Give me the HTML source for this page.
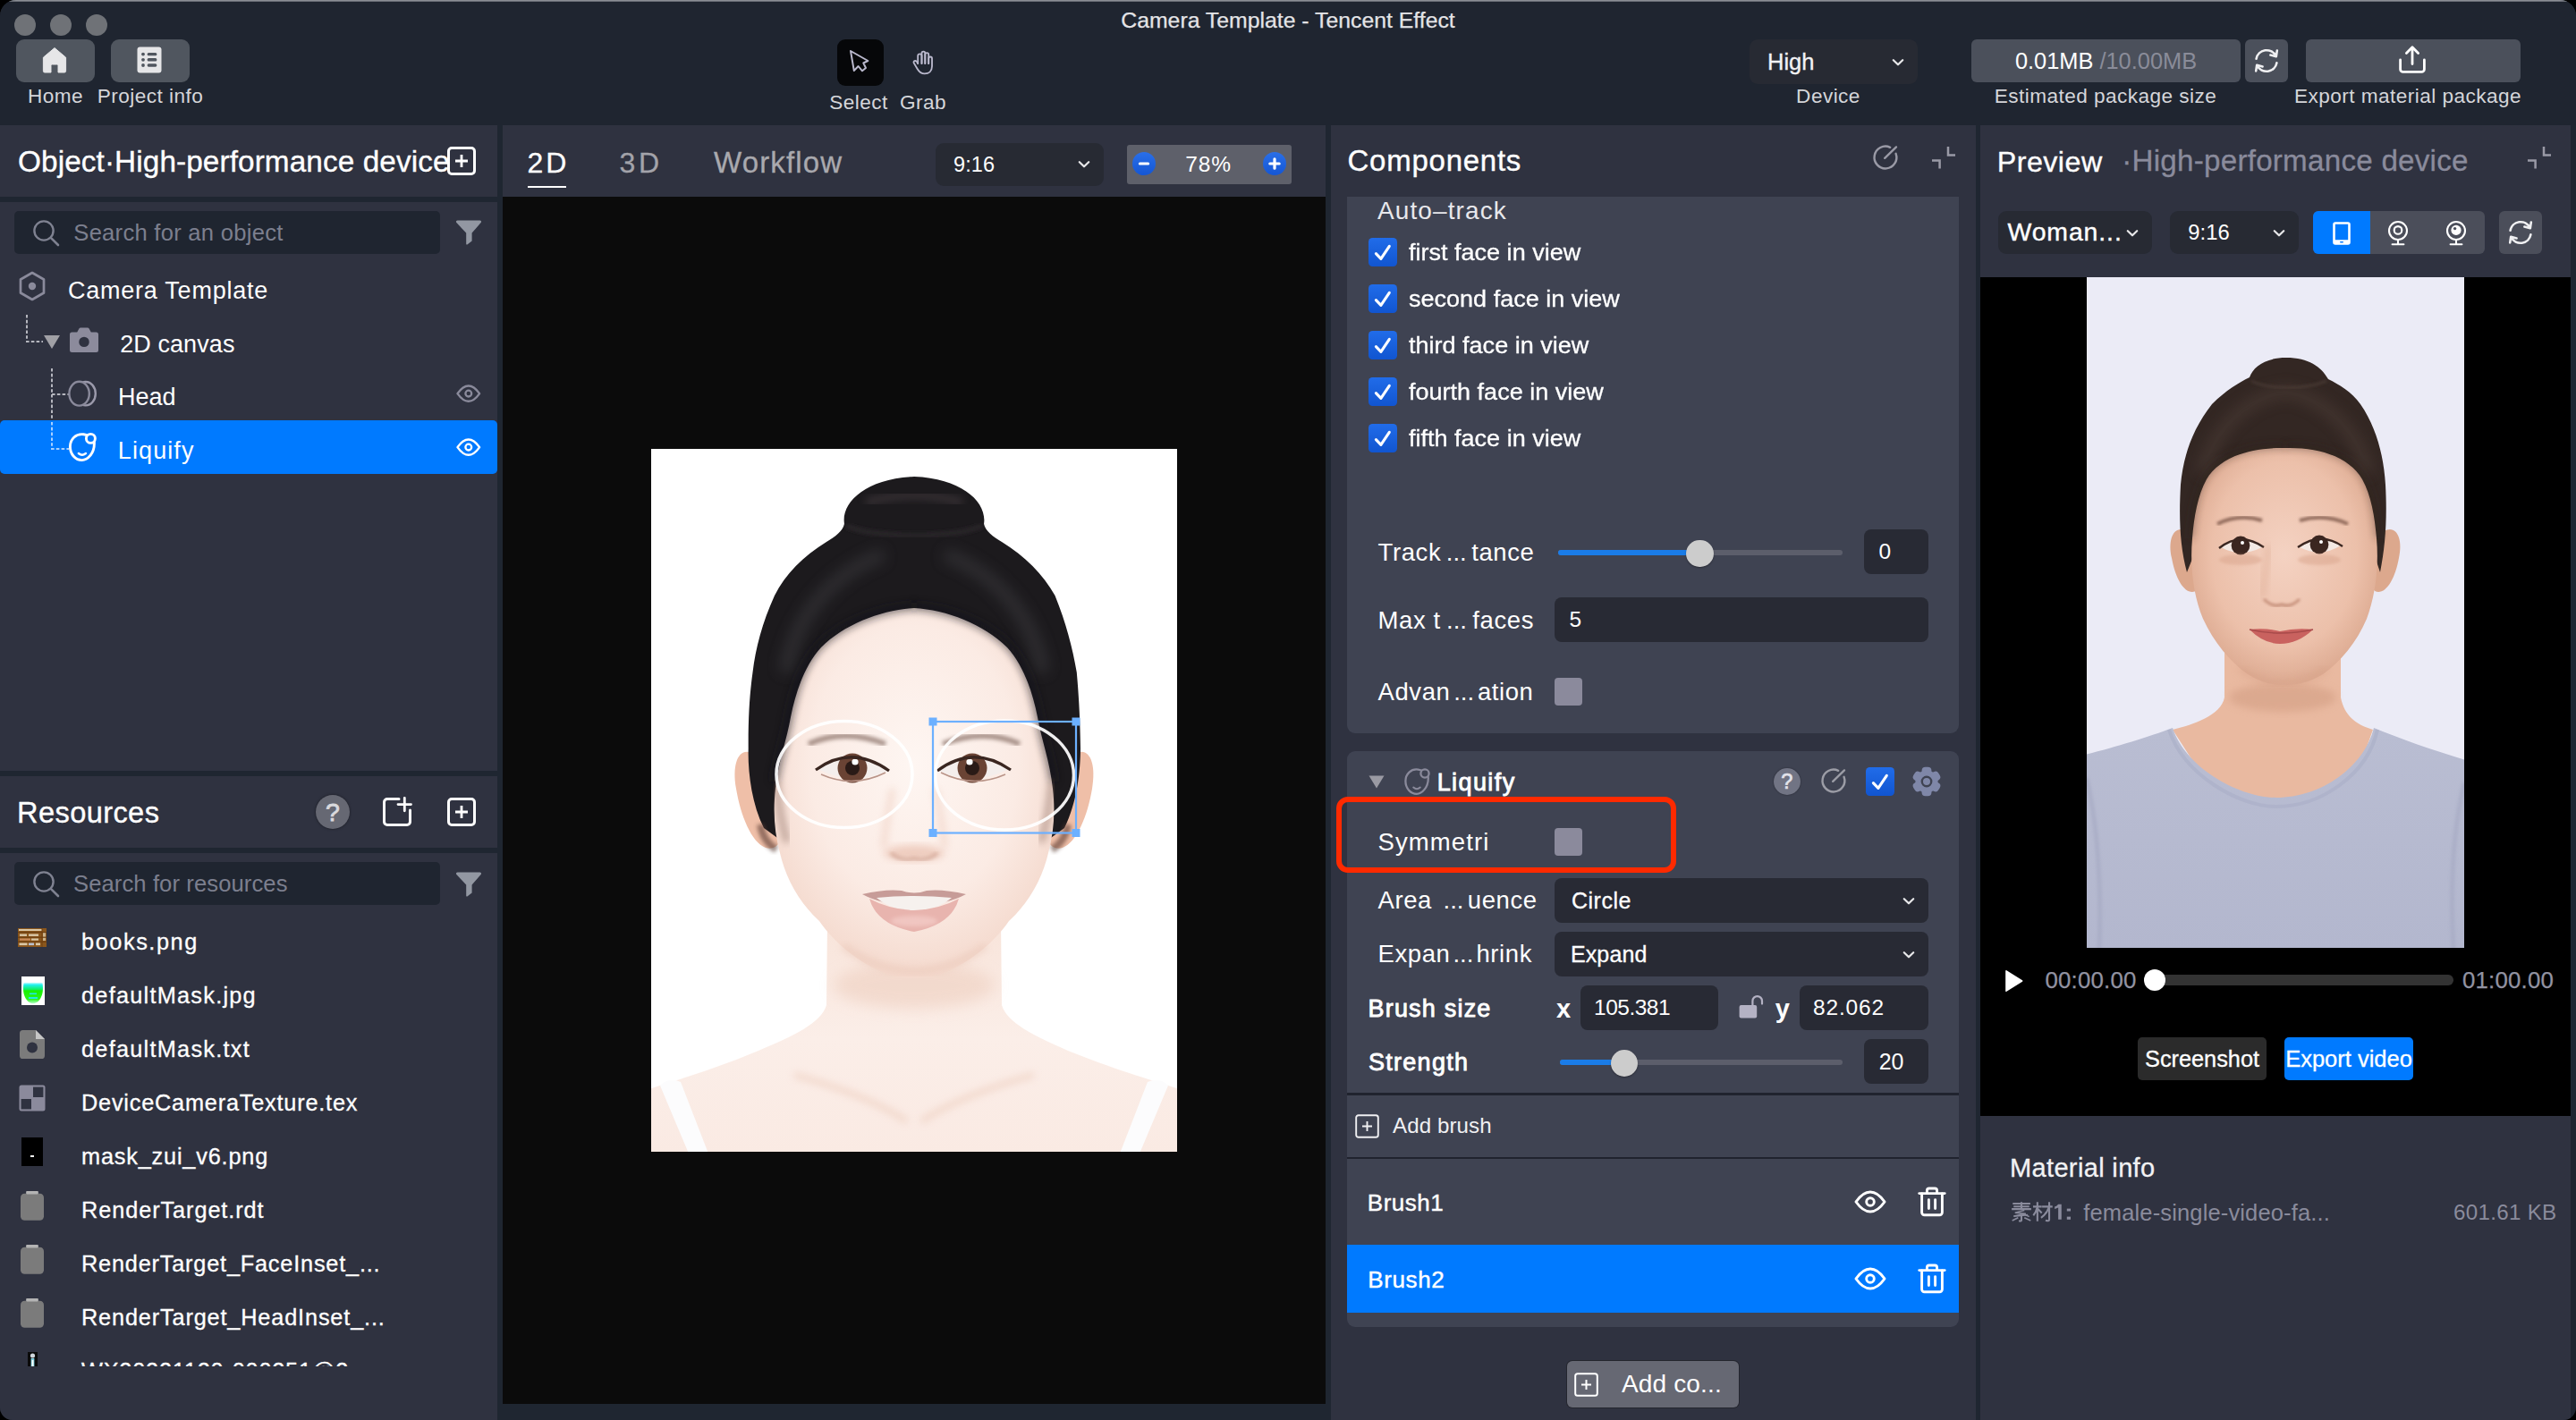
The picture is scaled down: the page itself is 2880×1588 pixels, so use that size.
<!DOCTYPE html>
<html>
<head>
<meta charset="utf-8">
<title>Camera Template - Tencent Effect</title>
<style>
*{box-sizing:border-box;margin:0;padding:0}
html,body{width:2880px;height:1588px;overflow:hidden;background:#000}
body{font-family:"Liberation Sans",sans-serif;color:#fff;position:relative}
.abs,#win div,#win span,#win svg{position:absolute}
#win{position:absolute;left:0;top:0;width:2880px;height:1588px;background:#1f2631;border-radius:18px 18px 14px 14px;overflow:hidden}
.t{white-space:nowrap;line-height:40px;height:40px}
.c{text-align:center}
.r{text-align:right}
.panel{background:#2f3240}
.card{background:#3f4352;border-radius:9px}
.inp{background:#282a34;border-radius:8px}
.lbl{font-size:22.6px;color:#d5d6da;letter-spacing:.45px}
.row{font-size:26.6px;color:#fff;left:92px}
.tree{font-size:27px;color:#fff;letter-spacing:.6px;margin-top:.6px}
.cb{width:32px;height:32px;border-radius:5px;background:#1b62e0}
.cbo{width:31px;height:31px;border-radius:4px;background:#8b8a9c;margin-left:-.5px}
.f27{font-size:27.5px;color:#fff;letter-spacing:.6px}.f27 span{letter-spacing:0}
</style>
</head>
<body>
<div id="win">
<!-- TOPBAR -->
<div id="topbar" style="left:0;top:0;width:2880px;height:140px;background:#1f2530">
<div style="left:0;top:0;width:2880px;height:2px;background:linear-gradient(#9a9da3,#5a5e67)"></div>
<div style="left:16px;top:16px;width:24px;height:24px;border-radius:50%;background:#6f7277"></div>
<div style="left:56px;top:16px;width:24px;height:24px;border-radius:50%;background:#6f7277"></div>
<div style="left:96px;top:16px;width:24px;height:24px;border-radius:50%;background:#6f7277"></div>
<div class="t c" style="left:1140px;top:2.600px;width:600px;font-size:24.800px;-webkit-text-stroke:.25px #e4e4e7;color:#e4e4e7">Camera Template - Tencent Effect</div>
<!-- home / project info -->
<div style="left:18px;top:44px;width:88px;height:48px;border-radius:9px;background:#50565f"></div>
<svg style="left:47px;top:53px" width="28" height="29" viewBox="0 0 28 29"><path d="M14 .6 L26.6 11.2 V26.4 a1.6 1.6 0 0 1 -1.6 1.6 H18 V20.4 a1.4 1.4 0 0 0 -1.4 -1.4 H11.4 a1.4 1.4 0 0 0 -1.4 1.4 V28 H3 a1.6 1.6 0 0 1 -1.6 -1.6 V11.2 Z" fill="#e6e6e8" stroke="#e6e6e8" stroke-width="1" stroke-linejoin="round"/></svg>
<div style="left:124px;top:44px;width:88px;height:48px;border-radius:9px;background:#50565f"></div>
<svg style="left:153px;top:52px" width="28" height="30" viewBox="0 0 28 30"><rect x=".5" y=".5" width="27" height="29" rx="3" fill="#e6e6e8"/><g fill="#50565f"><circle cx="7" cy="8.6" r="1.9"/><circle cx="7" cy="14.8" r="1.9"/><circle cx="7" cy="21" r="1.9"/><rect x="11.6" y="6.9" width="10.8" height="3.4" rx="1.6"/><rect x="11.6" y="13.1" width="10.8" height="3.4" rx="1.6"/><rect x="11.6" y="19.3" width="10.8" height="3.4" rx="1.6"/></g></svg>
<div class="t c lbl" style="left:2px;top:88px;width:120px">Home</div>
<div class="t c lbl" style="left:88px;top:88px;width:160px">Project info</div>
<!-- select / grab -->
<div style="left:936px;top:44px;width:52px;height:52px;border-radius:9px;background:#060709"></div>
<svg style="left:948px;top:54px" width="26" height="28" viewBox="0 0 26 28"><path d="M3 3 L22.400 14 L17.300 16.500 L20 22 L16 25.300 L11.600 20 L6.800 25 Z" fill="none" stroke="#bab9cd" stroke-width="1.950" stroke-linejoin="round"/></svg>
<svg style="left:1018px;top:55px" width="28" height="30" viewBox="0 0 28 30"><g fill="none" stroke="#bab9cd" stroke-width="1.850" stroke-linecap="round" stroke-linejoin="round"><path d="M8.200 16 V7.500 a2.150 2.150 0 0 1 4.300 0 V16"/><path d="M12.500 16 V4.500 a1.900 1.900 0 0 1 3.800 0 V16"/><path d="M16.300 16 V6 a1.950 1.950 0 0 1 3.900 0 V16"/><path d="M20.200 16 V10.400 a1.900 1.900 0 0 1 3.800 0 V19 c0 5.500 -3.600 8.400 -8.200 8.400 c-4 0 -6.200 -2 -8.200 -5.400 L3.800 15.600 a1.600 1.600 0 0 1 .6 -2.400 c1 -.5 2 -.2 2.600 .8 L8.200 16"/></g></svg>
<div class="t c lbl" style="left:900px;top:95px;width:120px">Select</div>
<div class="t c lbl" style="left:972px;top:95px;width:120px">Grab</div>
<!-- device -->
<div style="left:1956px;top:44px;width:187.500px;height:50px;border-radius:9px;background:#272a33"></div>
<div class="t" style="left:1976px;top:48.800px;font-size:25.500px;color:#f2f2f4;-webkit-text-stroke:.3px #f2f2f4">High</div>
<svg style="left:2113px;top:64px" width="18" height="12" viewBox="0 0 18 12"><path d="M3.800 3.300 L9 8.300 L14.200 3.300" fill="none" stroke="#e8e8ea" stroke-width="2.250" stroke-linecap="round" stroke-linejoin="round"/></svg>
<div class="t c lbl" style="left:1964px;top:88px;width:160px">Device</div>
<!-- package size -->
<div style="left:2204px;top:44px;width:301px;height:48px;border-radius:6px;background:#4b505b"></div>
<div class="t c" style="left:2204px;top:48px;width:301px;font-size:25.4px;color:#fff">0.01MB <span style="position:static;color:#8a8c99">/10.00MB</span></div>
<div style="left:2510px;top:44px;width:48px;height:48px;border-radius:6px;background:#4b505b"></div>
<svg style="left:2517px;top:51px" width="34" height="34" viewBox="0 0 34 34"><g fill="none" stroke="#f0f0f2" stroke-width="2.6" stroke-linecap="round" stroke-linejoin="round"><path d="M5.6 14.8 A11.6 11.6 0 0 1 27.4 11.6"/><path d="M28.8 5.6 L27.8 12.2 L21.4 10.6"/><path d="M28.4 19.2 A11.6 11.6 0 0 1 6.6 22.4"/><path d="M5.2 28.4 L6.2 21.8 L12.6 23.4"/></g></svg>
<div class="t c lbl" style="left:2174px;top:88px;width:360px">Estimated package size</div>
<!-- export -->
<div style="left:2578px;top:44px;width:240px;height:48px;border-radius:6px;background:#4b505b"></div>
<svg style="left:2680px;top:50px" width="34" height="34" viewBox="0 0 34 34"><g fill="none" stroke="#fff" stroke-width="2.8" stroke-linecap="round" stroke-linejoin="round"><path d="M17 21.6 V3.4 M10.4 9.4 L17 2.8 L23.6 9.4"/><path d="M3.6 17 V27.4 a3 3 0 0 0 3 3 H27.4 a3 3 0 0 0 3 -3 V17"/></g></svg>
<div class="t c lbl" style="left:2512px;top:88px;width:360px">Export material package</div>
</div>
<!-- LEFT -->
<div id="left" style="left:0;top:140px;width:556px;height:1448px">
<div class="panel" style="left:0;top:0;width:556px;height:80px"></div>
<div class="t" style="left:20px;top:20.900px;font-size:33.300px;color:#fff;letter-spacing:.11px;-webkit-text-stroke:.35px #fff">Object·High-performance device</div>
<svg style="left:500px;top:24px" width="32" height="32" viewBox="0 0 32 32"><rect x="1.5" y="1.5" width="29" height="29" rx="3.5" fill="none" stroke="#fff" stroke-width="3"/><path d="M9 16 H23 M16 9 V23" stroke="#fff" stroke-width="2.8"/></svg>
<div class="panel" style="left:0;top:86px;width:556px;height:636px"></div>
<div style="left:16px;top:96px;width:476px;height:48px;border-radius:5px;background:#1f2530"></div>
<svg style="left:36px;top:105px" width="32" height="32" viewBox="0 0 32 32"><circle cx="13" cy="13" r="10.6" fill="none" stroke="#7f8291" stroke-width="2.4"/><path d="M20.8 20.8 L29 29" stroke="#7f8291" stroke-width="2.6" stroke-linecap="round"/></svg>
<div class="t" style="left:82.300px;top:100px;font-size:25.600px;color:#7c7f8e;letter-spacing:.26px">Search for an object</div>
<svg style="left:509px;top:105px" width="30" height="30" viewBox="0 0 30 30"><path d="M2.6 1.4 H27.4 a1.6 1.6 0 0 1 1.2 2.7 L18.6 15.6 V24.6 L13.4 28.4 a.8 .8 0 0 1 -1.2 -.7 V15.6 L1.4 4.1 A1.6 1.6 0 0 1 2.6 1.4Z" fill="#9297a2"/></svg>
<!-- tree -->
<svg style="left:20px;top:163px" width="32" height="34" viewBox="0 0 32 34"><path d="M16 2 L29 9.5 V24.5 L16 32 L3 24.5 V9.5Z" fill="none" stroke="#8a8a9b" stroke-width="2.7" stroke-linejoin="round"/><circle cx="16" cy="17" r="4.2" fill="#8a8a9b"/></svg>
<div class="t tree" style="left:76px;top:164px;letter-spacing:.76px">Camera Template</div>
<svg style="left:26px;top:208px" width="60" height="160" viewBox="0 0 60 160"><g fill="none" stroke="#b5b6be" stroke-width="2" stroke-dasharray="3.6 2.2"><path d="M4 4 V34 H22"/><path d="M32 64 V154 H51"/><path d="M32 93 H51"/></g></svg>
<svg style="left:48px;top:234px" width="20" height="17" viewBox="0 0 20 17"><path d="M1 1 H19 L10 16Z" fill="#a0a0a5"/></svg>
<svg style="left:77px;top:225px" width="34" height="30" viewBox="0 0 34 30"><path d="M3.5 6.5 H9.2 L11.4 2.6 a2 2 0 0 1 1.7 -1 H20.9 a2 2 0 0 1 1.7 1 L24.8 6.5 H30.5 a2.5 2.5 0 0 1 2.5 2.5 V26.5 a2.5 2.5 0 0 1 -2.5 2.5 H3.5 a2.5 2.5 0 0 1 -2.5 -2.5 V9 a2.5 2.5 0 0 1 2.5 -2.5Z" fill="#8c8b9c"/><circle cx="17" cy="17.4" r="5.7" fill="#2f3240"/></svg>
<div class="t tree" style="left:134.200px;top:224px;letter-spacing:.08px">2D canvas</div>
<svg style="left:74px;top:283px" width="36" height="34" viewBox="0 0 36 34"><g fill="none" stroke-width="2.4"><ellipse cx="21.8" cy="17.2" rx="11" ry="13.2" stroke="#9b9aab"/><ellipse cx="14.6" cy="17.2" rx="11.2" ry="13.4" stroke="#8a8a9b" fill="#2f3240"/></g></svg>
<div class="t tree" style="left:132px;top:283.800px;letter-spacing:-.05px">Head</div>
<svg style="left:510.300px;top:290px" width="27.600" height="20.240" viewBox="0 0 30 22"><path d="M1.6 11 C6.4 4.2 10.6 1.6 15 1.6 C19.4 1.6 23.6 4.2 28.4 11 C23.6 17.8 19.4 20.4 15 20.4 C10.6 20.4 6.4 17.8 1.6 11Z" fill="none" stroke="#8a8a9b" stroke-width="2.6" stroke-linejoin="round"/><circle cx="15" cy="11" r="3.7" fill="none" stroke="#8a8a9b" stroke-width="2.5"/></svg>
<div style="left:0;top:330px;width:556px;height:60px;background:#007aff;border-radius:5px"></div>
<svg style="left:26px;top:208px" width="60" height="160" viewBox="0 0 60 160"><g fill="none" stroke="#a8d0ff" stroke-width="2" stroke-dasharray="3.6 2.2"><path d="M32 124 V154 H51"/></g></svg>
<svg style="left:76px;top:342px" width="34" height="36" viewBox="0 0 34 36"><g fill="none" stroke="#fff" stroke-width="2.9" stroke-linecap="round"><path d="M17.600 3.800 C9 2.600 2.400 9 2.400 17.600 C2.400 26 8.400 32.600 15.600 32.600 C22 32.600 29.400 25 29.400 14 C29.400 8 24 4.600 17.600 3.800Z"/><circle cx="25.400" cy="8.400" r="5" fill="#007aff"/><path d="M11.8 25 Q15.8 28.4 20 25" stroke-width="2.3"/></g></svg>
<div class="t tree" style="left:131.800px;top:343px;letter-spacing:1.1px">Liquify</div>
<svg style="left:510.300px;top:350px" width="27.600" height="20.240" viewBox="0 0 30 22"><path d="M1.6 11 C6.4 4.2 10.6 1.6 15 1.6 C19.4 1.6 23.6 4.2 28.4 11 C23.6 17.8 19.4 20.4 15 20.4 C10.6 20.4 6.4 17.8 1.6 11Z" fill="none" stroke="#fff" stroke-width="2.6" stroke-linejoin="round"/><circle cx="15" cy="11" r="3.7" fill="none" stroke="#fff" stroke-width="2.5"/></svg>
<!-- resources -->
<div class="panel" style="left:0;top:728px;width:556px;height:80px"></div>
<div class="t" style="left:19px;top:749px;font-size:32.600px;color:#fff;letter-spacing:.4px;-webkit-text-stroke:.35px #fff">Resources</div>
<div style="left:353px;top:749px;width:38px;height:38px;border-radius:50%;background:#666873;box-shadow:0 0 3px rgba(0,0,0,.5)"></div>
<div class="t c" style="left:353px;top:749px;width:38px;height:38px;line-height:39px;font-size:28.500px;color:#d9d9dd;-webkit-text-stroke:.8px #d9d9dd">?</div>
<svg style="left:427px;top:751px" width="34" height="34" viewBox="0 0 34 34"><path d="M19 2.5 H6 a3.5 3.5 0 0 0 -3.500 3.5 V28 a3.5 3.500 0 0 0 3.500 3.500 H28 a3.500 3.500 0 0 0 3.500 -3.500 V15" fill="none" stroke="#fff" stroke-width="3" stroke-linecap="round"/><path d="M18 8.600 H32.500 M25.300 1.300 V15.800" stroke="#fff" stroke-width="2.800" stroke-linecap="round"/></svg>
<svg style="left:500px;top:752px" width="32" height="32" viewBox="0 0 32 32"><rect x="1.5" y="1.5" width="29" height="29" rx="3.5" fill="none" stroke="#fff" stroke-width="3"/><path d="M9 16 H23 M16 9 V23" stroke="#fff" stroke-width="2.8"/></svg>
<div class="panel" style="left:0;top:814px;width:556px;height:634px"></div>
<div style="left:16px;top:824px;width:476px;height:48px;border-radius:5px;background:#1f2530"></div>
<svg style="left:36px;top:833px" width="32" height="32" viewBox="0 0 32 32"><circle cx="13" cy="13" r="10.6" fill="none" stroke="#7f8291" stroke-width="2.4"/><path d="M20.8 20.8 L29 29" stroke="#7f8291" stroke-width="2.6" stroke-linecap="round"/></svg>
<div class="t" style="left:82px;top:828px;font-size:25.600px;color:#7c7f8e;letter-spacing:.1px">Search for resources</div>
<svg style="left:509px;top:834px" width="30" height="30" viewBox="0 0 30 30"><path d="M2.6 1.4 H27.4 a1.6 1.6 0 0 1 1.2 2.7 L18.6 15.6 V24.6 L13.4 28.4 a.8 .8 0 0 1 -1.2 -.7 V15.6 L1.4 4.1 A1.6 1.6 0 0 1 2.6 1.4Z" fill="#9297a2"/></svg>
<div id="reslist" style="left:0;top:872px;width:556px;height:516px;overflow:hidden">
<div class="t" style="left:91px;top:20.5px;font-size:25.300px;letter-spacing:1.57px;-webkit-text-stroke:.3px #fff">books.png</div>
<div class="t" style="left:91px;top:80.5px;font-size:25.300px;letter-spacing:1.25px;-webkit-text-stroke:.3px #fff">defaultMask.jpg</div>
<div class="t" style="left:91px;top:140.5px;font-size:25.300px;letter-spacing:1.26px;-webkit-text-stroke:.3px #fff">defaultMask.txt</div>
<div class="t" style="left:91px;top:200.5px;font-size:25.300px;letter-spacing:0.79px;-webkit-text-stroke:.3px #fff">DeviceCameraTexture.tex</div>
<div class="t" style="left:91px;top:260.5px;font-size:25.300px;letter-spacing:0.81px;-webkit-text-stroke:.3px #fff">mask_zui_v6.png</div>
<div class="t" style="left:91px;top:320.5px;font-size:25.300px;letter-spacing:0.92px;-webkit-text-stroke:.3px #fff">RenderTarget.rdt</div>
<div class="t" style="left:91px;top:380.5px;font-size:25.300px;letter-spacing:0.80px;-webkit-text-stroke:.3px #fff">RenderTarget_FaceInset_...</div>
<div class="t" style="left:91px;top:440.5px;font-size:25.300px;letter-spacing:0.84px;-webkit-text-stroke:.3px #fff">RenderTarget_HeadInset_...</div>
<div class="t" style="left:91px;top:500.5px;font-size:25.300px;letter-spacing:0.80px;-webkit-text-stroke:.3px #fff">WX20221120-000251@2...</div>
<svg style="left:20px;top:26px" width="32" height="21" viewBox="0 0 32 21"><rect width="32" height="21" fill="#8a561c"/><g fill="#d9c7a6"><rect x="1" y="1" width="26" height="2"/><rect x="2" y="6.5" width="8" height="2.4"/><rect x="12" y="6.5" width="11" height="2.4"/><rect x="2" y="11.500" width="12" height="2.200" fill="#c98a5a"/><rect x="15" y="11.500" width="8" height="2.200"/><rect x="1.500" y="16.500" width="9" height="2.600"/><rect x="12" y="16.500" width="6" height="2.600" fill="#b8c0d0"/><rect x="20" y="16.500" width="5" height="2.600"/><rect x="28" y="5" width="3" height="9" fill="#c9b18a"/></g><g fill="#6e3f10"><rect y="4" width="32" height="1.200"/><rect y="9.600" width="32" height="1.200"/><rect y="14.600" width="32" height="1.200"/><rect x="26.500" width="1" height="21"/></g></svg>
<svg style="left:24px;top:80px" width="26" height="32" viewBox="0 0 26 32"><defs><linearGradient id="mk" x1="0" y1="0" x2="0" y2="1"><stop offset="0" stop-color="#e8ffff"/><stop offset=".12" stop-color="#22f0f0"/><stop offset=".34" stop-color="#10ee60"/><stop offset=".4" stop-color="#18f000"/><stop offset=".8" stop-color="#2cf41c"/><stop offset="1" stop-color="#b8ffd0"/></linearGradient></defs><rect width="26" height="32" fill="#fff"/><path d="M2.600 7 C6 5.800 9 7.200 13 6.600 C17 7.200 20 5.800 23.400 7 C24.600 14 24 20 21 25 C18.500 29 15.500 30.200 13 30.200 C10.500 30.200 7.500 29 5 25 C2 20 1.400 14 2.600 7Z" fill="url(#mk)"/><rect x="9" y="18.500" width="8" height="1.600" fill="#20e8e8"/><rect x="8" y="23" width="10" height="2" fill="#20e8e8"/></svg>
<svg style="left:22px;top:140px" width="28" height="32" viewBox="0 0 28 32"><path d="M3.600 0 H18 L28 10 V28.400 a3.600 3.600 0 0 1 -3.600 3.600 H3.600 a3.600 3.600 0 0 1 -3.600 -3.600 V3.600 A3.600 3.600 0 0 1 3.600 0Z" fill="#7b7b7b"/><path d="M18 0 L28 10 H18Z" fill="#c6c6c6"/><circle cx="14" cy="19.400" r="6" fill="#2f3240"/></svg>
<svg style="left:21px;top:201px" width="30" height="30" viewBox="0 0 30 30"><rect x=".5" y=".5" width="29" height="29" rx="2.500" fill="#8b8a9c"/><rect x="16" y="2.600" width="11.400" height="11.400" fill="#2f3240"/><rect x="2.600" y="16" width="11.400" height="11.400" fill="#2f3240"/></svg>
<div style="left:24px;top:260px;width:24px;height:32px;background:#000"></div>
<div style="left:34px;top:280px;width:4px;height:1.500px;background:#fff"></div>
<svg style="left:23px;top:320px" width="26" height="33" viewBox="0 0 26 33"><rect x="6.400" y="0" width="13.200" height="5" rx="1" fill="#b4b4b4"/><rect x="0" y="2.800" width="26" height="30" rx="4.500" fill="#7b7b7b"/><rect x="6.400" y="0" width="13.200" height="3.600" rx="1" fill="#b4b4b4"/></svg>
<svg style="left:23px;top:380px" width="26" height="33" viewBox="0 0 26 33"><rect x="6.400" y="0" width="13.200" height="5" rx="1" fill="#b4b4b4"/><rect x="0" y="2.800" width="26" height="30" rx="4.500" fill="#7b7b7b"/><rect x="6.400" y="0" width="13.200" height="3.600" rx="1" fill="#b4b4b4"/></svg>
<svg style="left:23px;top:440px" width="26" height="33" viewBox="0 0 26 33"><rect x="6.400" y="0" width="13.200" height="5" rx="1" fill="#b4b4b4"/><rect x="0" y="2.800" width="26" height="30" rx="4.500" fill="#7b7b7b"/><rect x="6.400" y="0" width="13.200" height="3.600" rx="1" fill="#b4b4b4"/></svg>
<svg style="left:31px;top:500px" width="11" height="16" viewBox="0 0 11 16"><rect width="11" height="16" fill="#0a0a0a"/><circle cx="5.500" cy="4" r="2.600" fill="#cfd6dc"/><rect x="3.600" y="7" width="3.800" height="9" fill="#7fd0e0"/><rect x="4.600" y="9" width="1.800" height="7" fill="#fff"/></svg>
</div>
</div>
<!-- CENTER -->
<div id="center" style="left:562px;top:140px;width:920px;height:1448px">
<div class="panel" style="left:0;top:0;width:920px;height:80px"></div>
<div class="t" style="left:27.500px;top:22px;font-size:32px;color:#fff;letter-spacing:3px;-webkit-text-stroke:.3px #fff">2D</div>
<div style="left:28px;top:67.500px;width:42.500px;height:2.800px;background:#fff"></div>
<div class="t" style="left:130.500px;top:22px;font-size:32px;color:#a3a3aa;letter-spacing:3.6px;-webkit-text-stroke:.3px #a3a3aa">3D</div>
<div class="t" style="left:236px;top:22px;font-size:33px;color:#a9a9ae;letter-spacing:1.15px;-webkit-text-stroke:.3px #a9a9ae">Workflow</div>
<div style="left:484px;top:20px;width:188px;height:48px;border-radius:9px;background:#272a33"></div>
<div class="t" style="left:504px;top:24px;font-size:23.500px;color:#fff;letter-spacing:.1px">9:16</div>
<svg style="left:641px;top:38px" width="18" height="12" viewBox="0 0 18 12"><path d="M3.800 3.300 L9 8.300 L14.200 3.300" fill="none" stroke="#e8e8ea" stroke-width="2.250" stroke-linecap="round" stroke-linejoin="round"/></svg>
<div style="left:698px;top:22px;width:184px;height:44px;border-radius:3px;background:#5e606a"></div>
<svg style="left:703px;top:29px" width="28" height="28" viewBox="0 0 28 28"><defs><linearGradient id="zg1" x1="0" y1="0" x2="0" y2="1"><stop offset="0" stop-color="#2a6fe8"/><stop offset="1" stop-color="#1456d4"/></linearGradient></defs><circle cx="14" cy="14" r="13" fill="url(#zg1)"/><path d="M9.400 14 H18.600" stroke="#fff" stroke-width="3.200" stroke-linecap="round"/></svg><svg style="left:849px;top:29px" width="28" height="28" viewBox="0 0 28 28"><defs><linearGradient id="zg2" x1="0" y1="0" x2="0" y2="1"><stop offset="0" stop-color="#2a6fe8"/><stop offset="1" stop-color="#1456d4"/></linearGradient></defs><circle cx="14" cy="14" r="13" fill="url(#zg2)"/><path d="M8.800 14 H19.200 M14 8.800 V19.200" stroke="#fff" stroke-width="3.200" stroke-linecap="round"/></svg>
<div class="t c" style="left:739px;top:24px;width:100px;font-size:24.500px;color:#fff;letter-spacing:.9px">78%</div>
<div style="left:0;top:80px;width:920px;height:1350px;background:#0b0b0b"></div>
<svg style="left:166px;top:362px" width="588" height="786" viewBox="0 0 588 786">
<defs>
<filter id="b2" x="-20%" y="-20%" width="140%" height="140%"><feGaussianBlur stdDeviation="2"/></filter>
<filter id="b4" x="-20%" y="-20%" width="140%" height="140%"><feGaussianBlur stdDeviation="4"/></filter>
<filter id="b8" x="-30%" y="-30%" width="160%" height="160%"><feGaussianBlur stdDeviation="8"/></filter>
<filter id="b14" x="-40%" y="-40%" width="180%" height="180%"><feGaussianBlur stdDeviation="14"/></filter>
<radialGradient id="skin" cx="50%" cy="42%" r="62%"><stop offset="0" stop-color="#fef6f2"/><stop offset=".6" stop-color="#fbebe4"/><stop offset="1" stop-color="#f3d6c9"/></radialGradient>
<linearGradient id="body" x1="0" y1="0" x2="0" y2="1"><stop offset="0" stop-color="#f8e4da"/><stop offset=".5" stop-color="#fbeee8"/><stop offset="1" stop-color="#faeae3"/></linearGradient>
<clipPath id="imgclip"><rect width="588" height="786"/></clipPath>
</defs>
<rect width="588" height="786" fill="#fff"/>
<g clip-path="url(#imgclip)">
<!-- shoulders / neck -->
<path d="M-2 788 V716 C20 708 60 698 120 673 C160 656 190 642 196 622 L197 530 H391 L392 622 C398 642 428 656 466 673 C528 698 568 708 590 716 V788Z" fill="url(#body)"/>
<ellipse cx="294" cy="600" rx="90" ry="26" fill="#edcdbd" opacity=".55" filter="url(#b8)"/>
<path d="M160 700 Q240 722 286 752 M428 700 Q348 722 302 752" stroke="#eccbbb" stroke-width="7" fill="none" opacity=".6" filter="url(#b4)"/>
<!-- straps -->
<path d="M10 712 Q20 702 33 708 L64 788 H42Z" fill="#fcfcfd"/>
<path d="M578 712 Q568 702 555 708 L524 788 H546Z" fill="#fcfcfd"/>
<!-- ears -->
<path d="M112 340 C98 334 90 352 95 380 C100 410 112 440 128 446 C142 450 150 436 148 410 L146 345Z" fill="#efbfa8"/>
<path d="M476 340 C490 334 498 352 493 380 C488 410 476 440 460 446 C446 450 438 436 440 410 L442 345Z" fill="#efbfa8"/>
<!-- hair -->
<path d="M126 424 C112 396 108 360 108.700 335 C108.500 300 110 275 113.500 250 C117 222 124 195 138 164 C150 140 170 120 196 104 C206 98 214 92 216 84 C212 60 240 33 294 31 C348 33 376 60 372 84 C374 92 382 98 392 104 C418 120 438 140 451.500 164 C464 195 471 222 475.800 250 C478 275 479.500 300 480 335 C480 360 476 396 462 424 L440 440 L148 440 L126 424Z" fill="#1c1a1d"/>
<path d="M218 86 C250 100 338 100 370 86" stroke="#2c282b" stroke-width="5" fill="none" filter="url(#b2)"/><path d="M150 250 C160 190 200 140 260 118 M438 250 C428 190 388 140 328 118" stroke="#4a484e" stroke-width="14" fill="none" opacity=".45" filter="url(#b8)"/><path d="M240 60 Q294 44 348 60" stroke="#4a4044" stroke-width="10" fill="none" opacity=".5" filter="url(#b4)"/><path d="M122 420 C124 432 130 442 140 448 M466 420 C464 432 458 442 448 448" stroke="#5a3a30" stroke-width="8" fill="none" opacity=".6" filter="url(#b2)"/>
<!-- face -->
<path d="M294 178 C330 180 372 196 398 222 C416 242 426 270 432 300 C436 324 446 350 449 380 C452 406 450 430 444 452 C438 478 424 506 400 528 C384 552 352 578 322 588 C304 593 284 593 266 588 C236 578 204 552 188 528 C164 506 150 478 144 452 C138 430 136 406 139 380 C142 350 152 324 156 300 C162 270 172 242 190 222 C216 196 258 180 294 178Z" fill="url(#skin)"/>
<!-- hairline soft edge -->
<path d="M294 176 C330 178 374 194 400 220 C420 242 428 270 434 300 C438 324 446 345 450 372" stroke="#19171a" stroke-width="9" fill="none" opacity=".55" filter="url(#b4)"/>
<path d="M294 176 C258 178 214 194 188 220 C168 242 160 270 154 300 C150 324 142 345 138 372" stroke="#19171a" stroke-width="9" fill="none" opacity=".55" filter="url(#b4)"/>
<!-- sideburn shadow -->
<path d="M140 372 C142 395 146 420 152 440" stroke="#7a5a50" stroke-width="7" fill="none" opacity=".5" filter="url(#b4)"/>
<path d="M448 372 C446 395 442 420 436 440" stroke="#7a5a50" stroke-width="7" fill="none" opacity=".5" filter="url(#b4)"/>
<!-- brows -->
<path d="M176 330 Q216 312 262 330" stroke="#8a7168" stroke-width="6" fill="none" opacity=".75" filter="url(#b2)"/>
<path d="M326 330 Q372 312 412 330" stroke="#8a7168" stroke-width="6" fill="none" opacity=".75" filter="url(#b2)"/>
<!-- eyes -->
<g>
<path d="M186 358 Q224 332 264 360 Q226 378 186 358Z" fill="#f4eeec"/>
<circle cx="225" cy="357" r="16.500" fill="#6a4334"/><circle cx="225" cy="357" r="8" fill="#2a1a16"/><circle cx="228" cy="350" r="3.600" fill="#fff"/>
<path d="M184 359 Q224 330 266 360" stroke="#3a2620" stroke-width="3.200" fill="none"/>
<path d="M190 364 Q226 380 262 362" stroke="#b99488" stroke-width="1.600" fill="none"/>
</g>
<g>
<path d="M322 360 Q360 332 400 358 Q360 378 322 360Z" fill="#f4eeec"/>
<circle cx="359" cy="357" r="16.500" fill="#6a4334"/><circle cx="359" cy="357" r="8" fill="#2a1a16"/><circle cx="356" cy="350" r="3.600" fill="#fff"/>
<path d="M320 360 Q360 330 402 359" stroke="#3a2620" stroke-width="3.200" fill="none"/>
<path d="M324 362 Q360 380 396 364" stroke="#b99488" stroke-width="1.600" fill="none"/>
</g>
<!-- nose -->
<ellipse cx="294" cy="452" rx="34" ry="9" fill="#e9bfae" opacity=".7" filter="url(#b4)"/>
<path d="M268 452 Q280 462 294 458 Q308 462 320 452" stroke="#c99a88" stroke-width="3" fill="none" opacity=".8" filter="url(#b2)"/>
<path d="M270 380 Q262 420 260 446 M318 380 Q326 420 328 446" stroke="#efcfc1" stroke-width="6" fill="none" opacity=".7" filter="url(#b4)"/>
<!-- mouth -->
<path d="M236 498 Q262 492 280 494 Q294 499 308 494 Q326 492 352 498 Q330 510 294 511 Q258 510 236 498Z" fill="#c79c98"/>
<path d="M252 502 Q294 498 336 502 Q320 516 294 517 Q268 516 252 502Z" fill="#f6f1ee"/>
<path d="M244 503 Q266 515 294 516 Q322 515 344 503 Q336 532 294 540 Q252 532 244 503Z" fill="#e8b4ae"/>
<ellipse cx="294" cy="528" rx="26" ry="6" fill="#f3cbc6" opacity=".8" filter="url(#b2)"/>
<!-- chin shadow -->
<path d="M214 556 Q294 612 374 556" stroke="#e6c1b0" stroke-width="6" fill="none" opacity=".6" filter="url(#b4)"/>
</g>
<!-- brush ellipses -->
<ellipse cx="216" cy="364" rx="76" ry="59.500" fill="none" stroke="#fff" stroke-opacity=".93" stroke-width="3.600"/>
<ellipse cx="395" cy="365" rx="77.500" ry="61" fill="none" stroke="#fff" stroke-opacity=".93" stroke-width="3.600"/>
<rect x="315" y="305" width="160" height="124.500" fill="none" stroke="#6cb0ff" stroke-width="2.200"/>
<g fill="#6cb0ff"><rect x="310.500" y="300.500" width="9" height="9"/><rect x="470.500" y="300.500" width="9" height="9"/><rect x="310.500" y="425" width="9" height="9"/><rect x="470.500" y="425" width="9" height="9"/></g>
</svg>

</div>
<!-- COMPONENTS -->
<div id="comp" style="left:1489px;top:140px;width:720px;height:1448px">
<div class="panel" style="left:-1px;top:0;width:721px;height:1448px"></div>
<div class="t" style="left:19px;top:20.100px;font-size:33px;color:#fff;letter-spacing:.75px;margin-left:-1.5px;-webkit-text-stroke:.35px #fff">Components</div>
<svg style="left:603px;top:20px" width="32" height="32" viewBox="0 0 32 32"><g fill="none" stroke="#9a9aa6" stroke-width="2.400" stroke-linecap="round"><path d="M21.200 4.800 A12.400 12.400 0 1 0 27.600 11.800"/><path d="M15.200 16.800 L28 4.400"/></g></svg>
<svg style="left:671px;top:23.5px" width="26" height="26" viewBox="0 0 26 26"><g fill="none" stroke="#9a9aa6" stroke-width="2.500"><path d="M18 0 V9.600 H26"/><path d="M0 15.600 H8.600 V24.600"/></g></svg>
<!-- card 1 -->
<div style="left:17px;top:80px;width:684px;height:600px;background:#3f4352;border-radius:0 0 9px 9px"></div>
<div class="t" style="left:51.5px;top:75.700px;font-size:28px;color:#e8e8ec;letter-spacing:1.1px;margin-left:-.5px">Auto–track</div>
<svg style="left:41px;top:126px" width="32" height="32" viewBox="0 0 32 32"><defs><linearGradient id="cg0" x1="0" y1="0" x2="0" y2="1"><stop offset="0" stop-color="#216ce9"/><stop offset="1" stop-color="#1155d0"/></linearGradient></defs><rect width="32" height="32" rx="4.500" fill="url(#cg0)"/><path d="M8.400 17.600 L13.900 23.300 L23.300 9.400" fill="none" stroke="#fff" stroke-width="3.100" stroke-linecap="round" stroke-linejoin="round"/></svg><div class="t f27" style="left:85.500px;top:123.2px;font-size:25.700px;letter-spacing:0;transform:scaleX(1.052);transform-origin:0 50%;margin-top:-.9px;-webkit-text-stroke:.3px #fff">first face in view</div>
<svg style="left:41px;top:178px" width="32" height="32" viewBox="0 0 32 32"><defs><linearGradient id="cg1" x1="0" y1="0" x2="0" y2="1"><stop offset="0" stop-color="#216ce9"/><stop offset="1" stop-color="#1155d0"/></linearGradient></defs><rect width="32" height="32" rx="4.500" fill="url(#cg1)"/><path d="M8.400 17.600 L13.900 23.300 L23.300 9.400" fill="none" stroke="#fff" stroke-width="3.100" stroke-linecap="round" stroke-linejoin="round"/></svg><div class="t f27" style="left:85.500px;top:175.2px;font-size:25.700px;letter-spacing:0;transform:scaleX(1.052);transform-origin:0 50%;margin-top:-.9px;-webkit-text-stroke:.3px #fff">second face in view</div>
<svg style="left:41px;top:230px" width="32" height="32" viewBox="0 0 32 32"><defs><linearGradient id="cg2" x1="0" y1="0" x2="0" y2="1"><stop offset="0" stop-color="#216ce9"/><stop offset="1" stop-color="#1155d0"/></linearGradient></defs><rect width="32" height="32" rx="4.500" fill="url(#cg2)"/><path d="M8.400 17.600 L13.900 23.300 L23.300 9.400" fill="none" stroke="#fff" stroke-width="3.100" stroke-linecap="round" stroke-linejoin="round"/></svg><div class="t f27" style="left:85.500px;top:227.2px;font-size:25.700px;letter-spacing:0;transform:scaleX(1.052);transform-origin:0 50%;margin-top:-.9px;-webkit-text-stroke:.3px #fff">third face in view</div>
<svg style="left:41px;top:282px" width="32" height="32" viewBox="0 0 32 32"><defs><linearGradient id="cg3" x1="0" y1="0" x2="0" y2="1"><stop offset="0" stop-color="#216ce9"/><stop offset="1" stop-color="#1155d0"/></linearGradient></defs><rect width="32" height="32" rx="4.500" fill="url(#cg3)"/><path d="M8.400 17.600 L13.900 23.300 L23.300 9.400" fill="none" stroke="#fff" stroke-width="3.100" stroke-linecap="round" stroke-linejoin="round"/></svg><div class="t f27" style="left:85.500px;top:279.2px;font-size:25.700px;letter-spacing:0;transform:scaleX(1.052);transform-origin:0 50%;margin-top:-.9px;-webkit-text-stroke:.3px #fff">fourth face in view</div>
<svg style="left:41px;top:334px" width="32" height="32" viewBox="0 0 32 32"><defs><linearGradient id="cg4" x1="0" y1="0" x2="0" y2="1"><stop offset="0" stop-color="#216ce9"/><stop offset="1" stop-color="#1155d0"/></linearGradient></defs><rect width="32" height="32" rx="4.500" fill="url(#cg4)"/><path d="M8.400 17.600 L13.900 23.300 L23.300 9.400" fill="none" stroke="#fff" stroke-width="3.100" stroke-linecap="round" stroke-linejoin="round"/></svg><div class="t f27" style="left:85.500px;top:331.2px;font-size:25.700px;letter-spacing:0;transform:scaleX(1.052);transform-origin:0 50%;margin-top:-.9px;-webkit-text-stroke:.3px #fff">fifth face in view</div>
<div class="t f27" style="left:51.5px;top:457.5px">Track<span style="position:static;display:inline-block;width:34px;text-align:center">...</span>tance</div><div style="left:253px;top:474.8px;width:318px;height:6.400px;border-radius:3.200px;background:#5c5e6b"></div><div style="left:253px;top:474.8px;width:158.5999999999999px;height:6.400px;border-radius:3.200px;background:#1a7ce8"></div><div style="left:396.4px;top:463.6px;width:30.400px;height:30.400px;border-radius:50%;background:#ccc;box-shadow:0 1px 2px rgba(0,0,0,.35)"></div><div class="inp" style="left:595px;top:452px;width:72px;height:49.500px"></div><div class="t" style="left:611.5px;top:456.5px;font-size:24.500px">0</div>
<div class="t f27" style="left:51.5px;top:533.8px">Max t<span style="position:static;display:inline-block;width:35.600px;text-align:center">...</span>faces</div><div class="inp" style="left:249px;top:528px;width:418px;height:49.500px"></div><div class="t" style="left:265.5px;top:532.5px;font-size:24.500px">5</div>
<div class="t f27" style="left:51.5px;top:614.3px">Advan<span style="position:static;display:inline-block;width:30.400px;text-align:center">...</span>ation</div><div class="cbo" style="left:249.5px;top:618.2px"></div>
<!-- card 2 -->
<div class="card" style="left:17px;top:700px;width:684px;height:644px"></div>
<svg style="left:41px;top:727px" width="18" height="15" viewBox="0 0 18 15"><path d="M.5 .5 H17.500 L9 14.500Z" fill="#9a9aa3"/></svg>
<svg style="left:79.5px;top:717px" width="32" height="34" viewBox="0 0 32 34"><g fill="none" stroke="#8a8a9b" stroke-width="2.300" stroke-linecap="round"><path d="M16.600 3.600 C8.600 2.400 2.400 8.400 2.400 16.600 C2.400 24.600 8 30.800 14.800 30.800 C20.800 30.800 27.800 23.600 27.800 13.200 C27.800 7.600 22.600 4.400 16.600 3.600Z"/><circle cx="24" cy="8" r="4.600" fill="#3f4352"/><path d="M11.200 23.600 Q15 26.800 18.800 23.600" stroke-width="2"/></g></svg>
<div class="t" style="left:119.7px;top:714.5px;font-size:27px;letter-spacing:1.4px;margin-left:-2px;-webkit-text-stroke:.85px #fff">Liquify</div>
<div style="left:493.6px;top:718.6px;width:30.400px;height:30.400px;border-radius:50%;background:#717484;box-shadow:0 0 2px rgba(0,0,0,.45)"></div>
<div class="t c" style="left:493.6px;top:718.6px;width:30.400px;height:30.400px;line-height:31.500px;font-size:23.500px;color:#e3e3ea;-webkit-text-stroke:.7px #e3e3ea">?</div>
<svg style="left:545.4px;top:717.4px" width="32" height="32" viewBox="0 0 32 32"><g fill="none" stroke="#9c9da6" stroke-width="2.400" stroke-linecap="round"><path d="M21.200 4.800 A12.400 12.400 0 1 0 27.600 11.800"/><path d="M15.200 16.800 L28 4.400"/></g></svg>
<svg style="left:597px;top:718px" width="32" height="32" viewBox="0 0 32 32"><defs><linearGradient id="cg9" x1="0" y1="0" x2="0" y2="1"><stop offset="0" stop-color="#216ce9"/><stop offset="1" stop-color="#1155d0"/></linearGradient></defs><rect width="32" height="32" rx="4.500" fill="url(#cg9)"/><path d="M8.400 17.600 L13.900 23.300 L23.300 9.400" fill="none" stroke="#fff" stroke-width="3.100" stroke-linecap="round" stroke-linejoin="round"/></svg>
<svg style="left:647.8px;top:717px" width="34" height="34" viewBox="0 0 34 34"><g fill="#7f87a8"><circle cx="17" cy="17" r="12.600"/><g id="gt"><rect x="11.600" y=".8" width="10.800" height="32.400" rx="4"/></g><use href="#gt" transform="rotate(60 17 17)"/><use href="#gt" transform="rotate(120 17 17)"/></g><circle cx="17" cy="17" r="5.200" fill="none" stroke="#3f4352" stroke-width="2.400"/></svg>
<div style="left:5px;top:750.5px;width:379.500px;height:85px;border:6.600px solid #ff2a00;border-radius:13px"></div>
<div class="t f27" style="left:51.5px;top:782px;letter-spacing:1.1px">Symmetri</div>
<div class="cbo" style="left:249.5px;top:786.2px"></div>
<div class="t f27" style="left:51.5px;top:847.2px">Area <span style="position:static;display:inline-block;width:31.500px;text-align:center">...</span>uence</div>
<div class="inp" style="left:249px;top:842px;width:418px;height:50px"></div>
<div class="t" style="left:269px;top:846.6px;font-size:25px;letter-spacing:.5px;margin-left:-1px;-webkit-text-stroke:.3px #fff">Circle</div>
<svg style="left:635.6px;top:862px" width="18" height="12" viewBox="0 0 18 12"><path d="M3.800 3.300 L9 8.300 L14.200 3.300" fill="none" stroke="#e8e8ea" stroke-width="2.250" stroke-linecap="round" stroke-linejoin="round"/></svg>
<div class="t f27" style="left:51.5px;top:907.2px">Expan<span style="position:static;display:inline-block;width:28.900px;text-align:center">...</span>hrink</div>
<div class="inp" style="left:249px;top:902px;width:418px;height:50px"></div>
<div class="t" style="left:269px;top:906.6px;font-size:25px;letter-spacing:.1px;margin-left:-2px;-webkit-text-stroke:.3px #fff">Expand</div>
<svg style="left:635.6px;top:922px" width="18" height="12" viewBox="0 0 18 12"><path d="M3.800 3.300 L9 8.300 L14.200 3.300" fill="none" stroke="#e8e8ea" stroke-width="2.250" stroke-linecap="round" stroke-linejoin="round"/></svg>
<div class="t" style="left:41.5px;top:968px;font-size:27px;letter-spacing:1.2px;margin-left:-1px;-webkit-text-stroke:.85px #fff">Brush size</div>
<div class="t" style="left:251px;top:967px;font-size:29px;font-weight:bold;margin-top:1px">x</div>
<div class="inp" style="left:278px;top:962px;width:154px;height:49.600px"></div>
<div class="t" style="left:294.4px;top:967px;font-size:24.500px;letter-spacing:-.5px;margin-left:-1.4px">105.381</div>
<svg style="left:454px;top:971px" width="30" height="29" viewBox="0 0 30 29"><rect x="1.600" y="13" width="19.600" height="14.400" rx="2" fill="#b4b2c4"/><path d="M16.400 13.400 V8.400 a5.300 5.300 0 0 1 10.600 0 V11.600" fill="none" stroke="#b4b2c4" stroke-width="2.200" stroke-linecap="round"/></svg>
<div class="t" style="left:495.8px;top:967px;font-size:29px;font-weight:bold;margin-top:1px">y</div>
<div class="inp" style="left:522.6px;top:962px;width:144.200px;height:49.600px"></div>
<div class="t" style="left:539px;top:967px;font-size:24.500px;letter-spacing:.85px;margin-left:-1px">82.062</div>
<div class="t" style="left:41.5px;top:1028px;font-size:27px;letter-spacing:1.27px;margin-left:-.5px;-webkit-text-stroke:.85px #fff">Strength</div>
<div style="left:255px;top:1044.8px;width:316px;height:6.400px;border-radius:3.200px;background:#5c5e6b"></div><div style="left:255px;top:1044.8px;width:72px;height:6.400px;border-radius:3.200px;background:#1a7ce8"></div><div style="left:311.8px;top:1033.6px;width:30.400px;height:30.400px;border-radius:50%;background:#ccc;box-shadow:0 1px 2px rgba(0,0,0,.35)"></div>
<div class="inp" style="left:595.3px;top:1022px;width:71.500px;height:49.800px"></div>
<div class="t" style="left:611.7px;top:1027.3px;font-size:25px">20</div>
<div style="left:17px;top:1082px;width:684px;height:2.600px;background:#20232e"></div>
<svg style="left:26px;top:1105.6px" width="27" height="27" viewBox="0 0 27 27"><rect x="1.200" y="1.200" width="24.600" height="24.600" rx="2.600" fill="none" stroke="#f0f0f2" stroke-width="1.900"/><path d="M8 13.500 H19 M13.500 8 V19" stroke="#f0f0f2" stroke-width="1.900"/></svg>
<div class="t" style="left:68px;top:1099px;font-size:24.100px;color:#f0f0f2;letter-spacing:.1px">Add brush</div>
<div style="left:17px;top:1153.8px;width:684px;height:2.600px;background:#20232e"></div>
<div class="t" style="left:41.8px;top:1184.5px;font-size:26px;letter-spacing:.5px;margin-left:-2px;-webkit-text-stroke:.4px #fff">Brush1</div>
<svg style="left:584px;top:1191px" width="36" height="26" viewBox="0 0 36 26"><path d="M2 13 C7.600 5 12.800 2 18 2 C23.200 2 28.400 5 34 13 C28.400 21 23.200 24 18 24 C12.800 24 7.600 21 2 13Z" fill="none" stroke="#fff" stroke-width="3" stroke-linejoin="round"/><circle cx="18" cy="13" r="4.300" fill="none" stroke="#fff" stroke-width="2.900"/></svg>
<svg style="left:655px;top:1187px" width="32" height="34" viewBox="0 0 32 34"><g fill="none" stroke="#fff" stroke-width="2.900" stroke-linecap="round" stroke-linejoin="round"><path d="M1.800 7.600 H30.200"/><path d="M10.400 7 V4.400 a2.400 2.400 0 0 1 2.400 -2.400 H19.200 a2.400 2.400 0 0 1 2.400 2.400 V7"/><path d="M4.600 8 V28.800 a3 3 0 0 0 3 3 H24.400 a3 3 0 0 0 3 -3 V8"/><path d="M12.400 14.600 V24.600 M19.600 14.600 V24.600"/></g></svg>
<div style="left:17px;top:1252px;width:684px;height:75.700px;background:#007aff"></div>
<div class="t" style="left:41.8px;top:1270.7px;font-size:26px;-webkit-text-stroke:.4px #fff;letter-spacing:.6px;margin-left:-1.5px">Brush2</div>
<svg style="left:584px;top:1277px" width="36" height="26" viewBox="0 0 36 26"><path d="M2 13 C7.600 5 12.800 2 18 2 C23.200 2 28.400 5 34 13 C28.400 21 23.200 24 18 24 C12.800 24 7.600 21 2 13Z" fill="none" stroke="#fff" stroke-width="3" stroke-linejoin="round"/><circle cx="18" cy="13" r="4.300" fill="none" stroke="#fff" stroke-width="2.900"/></svg>
<svg style="left:655px;top:1273px" width="32" height="34" viewBox="0 0 32 34"><g fill="none" stroke="#fff" stroke-width="2.900" stroke-linecap="round" stroke-linejoin="round"><path d="M1.800 7.600 H30.200"/><path d="M10.400 7 V4.400 a2.400 2.400 0 0 1 2.400 -2.400 H19.200 a2.400 2.400 0 0 1 2.400 2.400 V7"/><path d="M4.600 8 V28.800 a3 3 0 0 0 3 3 H24.400 a3 3 0 0 0 3 -3 V8"/><path d="M12.400 14.600 V24.600 M19.600 14.600 V24.600"/></g></svg>
<div style="left:262.8px;top:1382px;width:192.200px;height:52px;border-radius:6px;background:#666873;box-shadow:0 0 0 1px #24262e"></div>
<svg style="left:271.4px;top:1395.3px" width="27" height="27" viewBox="0 0 27 27"><rect x="1.200" y="1.200" width="24.600" height="24.600" rx="2.600" fill="none" stroke="#fff" stroke-width="2"/><path d="M8 13.500 H19 M13.500 8 V19" stroke="#fff" stroke-width="2"/></svg>
<div class="t" style="left:324px;top:1387.5px;font-size:28px;letter-spacing:.15px">Add co...</div>
</div>
<!-- PREVIEW -->
<div id="prev" style="left:2214px;top:140px;width:666px;height:1448px">
<div class="panel" style="left:0;top:0;width:660px;height:1448px"></div>
<div class="t" style="left:21.2px;top:20.600px;font-size:32.200px;color:#fff;letter-spacing:.5px;margin-left:-2.5px;-webkit-text-stroke:.35px #fff">Preview</div>
<div class="t" style="left:158.200px;top:19.800px;font-size:33.200px;color:#8a8b9c;letter-spacing:.24px;-webkit-text-stroke:.3px #8a8b9c">·High-performance device</div>
<svg style="left:612px;top:23.5px" width="26" height="26" viewBox="0 0 26 26"><g fill="none" stroke="#9a9aa6" stroke-width="2.500"><path d="M18 0 V9.600 H26"/><path d="M0 15.600 H8.600 V24.600"/></g></svg>
<div style="left:20px;top:96px;width:172px;height:47.600px;border-radius:9px;background:#272a33"></div>
<div class="t" style="left:30.5px;top:99px;font-size:28.400px;-webkit-text-stroke:.4px #fff;letter-spacing:.9px">Woman...</div>
<svg style="left:161.1px;top:115px" width="18" height="12" viewBox="0 0 18 12"><path d="M3.800 3.300 L9 8.300 L14.200 3.300" fill="none" stroke="#e8e8ea" stroke-width="2.250" stroke-linecap="round" stroke-linejoin="round"/></svg>
<div style="left:212px;top:96px;width:144px;height:47.600px;border-radius:9px;background:#272a33"></div>
<div class="t" style="left:232.2px;top:99.6px;font-size:23.800px;letter-spacing:.1px">9:16</div>
<svg style="left:324.5px;top:115px" width="18" height="12" viewBox="0 0 18 12"><path d="M3.800 3.300 L9 8.300 L14.200 3.300" fill="none" stroke="#e8e8ea" stroke-width="2.250" stroke-linecap="round" stroke-linejoin="round"/></svg>
<div style="left:372px;top:96px;width:192px;height:47.600px;border-radius:6px;background:#4b4e5a"></div>
<div style="left:372px;top:96px;width:64px;height:47.600px;border-radius:6px 0 0 6px;background:#007aff"></div>
<svg style="left:392.5px;top:106.5px" width="22" height="28" viewBox="0 0 22 28"><path d="M4 1.200 H18 a2.800 2.800 0 0 1 2.800 2.800 V24 a2.800 2.800 0 0 1 -2.800 2.800 H4 a2.800 2.800 0 0 1 -2.800 -2.800 V4 a2.800 2.800 0 0 1 2.800 -2.800Z M3.800 3.800 V21.200 H18.200 V3.800Z" fill="#fff" fill-rule="evenodd"/><rect x="9" y="23" width="4" height="1.600" rx=".8" fill="#007aff"/></svg>
<svg style="left:455.4px;top:105.5px" width="24" height="30" viewBox="0 0 24 30"><g fill="none" stroke="#fff" stroke-width="2.100"><circle cx="12" cy="12" r="10"/><circle cx="12" cy="11.400" r="4.300"/><path d="M12 22 V27 M5.600 27.200 H18.400" stroke-linecap="round"/></g></svg>
<svg style="left:519.8px;top:105.5px" width="24" height="30" viewBox="0 0 24 30"><g fill="none" stroke="#fff" stroke-width="2.100"><circle cx="12" cy="12" r="10"/><path d="M12 22 V27 M5.600 27.200 H18.400" stroke-linecap="round"/></g><circle cx="12" cy="11.400" r="5.600" fill="#fff"/><circle cx="10.600" cy="9.600" r="1.700" fill="#4b4e5a"/></svg>
<div style="left:580px;top:96px;width:48px;height:47.600px;border-radius:6px;background:#4b4e5a"></div>
<svg style="left:587px;top:103px" width="34" height="34" viewBox="0 0 34 34"><g fill="none" stroke="#f0f0f2" stroke-width="2.600" stroke-linecap="round" stroke-linejoin="round"><path d="M5.600 14.800 A11.600 11.600 0 0 1 27.400 11.600"/><path d="M28.800 5.600 L27.800 12.200 L21.400 10.600"/><path d="M28.400 19.200 A11.600 11.600 0 0 1 6.600 22.400"/><path d="M5.200 28.400 L6.200 21.800 L12.600 23.400"/></g></svg>
<div style="left:0;top:170px;width:660px;height:937.600px;background:#000"></div>
<svg style="left:118.800px;top:170px" width="422" height="750.200" viewBox="0 0 422 750.200">
<defs>
<filter id="pb2" x="-20%" y="-20%" width="140%" height="140%"><feGaussianBlur stdDeviation="1.600"/></filter>
<filter id="pb4" x="-20%" y="-20%" width="140%" height="140%"><feGaussianBlur stdDeviation="4"/></filter>
<filter id="pb8" x="-30%" y="-30%" width="160%" height="160%"><feGaussianBlur stdDeviation="8"/></filter>
<radialGradient id="pskin" cx="50%" cy="45%" r="60%"><stop offset="0" stop-color="#f4d2c2"/><stop offset=".65" stop-color="#ecc0aa"/><stop offset="1" stop-color="#d8a48a"/></radialGradient>
<linearGradient id="pshirt" x1="0" y1="0" x2="0" y2="1"><stop offset="0" stop-color="#b9bdd2"/><stop offset="1" stop-color="#b3b7ce"/></linearGradient>
<clipPath id="pclip"><rect width="422" height="750.200"/></clipPath>
</defs>
<rect width="422" height="750.200" fill="#ebebf6"/>
<g clip-path="url(#pclip)">
<!-- neck -->
<path d="M154 420 V470 C150 490 120 500 96 506 L150 590 H290 L320 506 C300 500 288 490 284 470 V420Z" fill="#e9b9a0"/>
<ellipse cx="219" cy="470" rx="60" ry="16" fill="#d39f84" opacity=".6" filter="url(#pb4)"/>
<!-- shirt -->
<path d="M-2 752 V534 C30 526 70 514 96 504 C110 548 170 582 212 582 C262 582 310 548 321 504 C350 516 390 530 424 540 V752Z" fill="url(#pshirt)"/>
<path d="M92 506 C108 556 170 592 212 592 C262 592 314 556 325 506" fill="none" stroke="#aeb2ca" stroke-width="4" opacity=".9"/>
<path d="M0 560 Q18 640 14 752 M422 566 Q404 640 410 752" stroke="#a5a9c2" stroke-width="5" fill="none" opacity=".6" filter="url(#pb2)"/>
<!-- ears -->
<path d="M112 284 C98 276 90 292 95 314 C99 336 108 352 118 352 C126 352 128 340 127 322Z" fill="#dca88d"/>
<path d="M332 284 C346 276 354 292 349 314 C345 336 336 352 326 352 C318 352 316 340 317 322Z" fill="#dca88d"/>
<!-- hair -->
<path d="M112 330 C104 300 103 270 105 232 C108 200 118 170 140 142 C156 126 170 118 182 112 C186 100 200 90 223 90 C248 90 262 100 270 114 C282 120 296 128 306 142 C324 168 332 200 334 232 C336 270 334 300 328 330 L318 300 L124 300Z" fill="#332723"/><path d="M130 220 C140 170 180 135 222 128 C264 135 304 170 314 220" stroke="#5a4a42" stroke-width="12" fill="none" opacity=".45" filter="url(#pb8)"/>
<path d="M184 116 C204 126 244 126 268 116" stroke="#4a3a34" stroke-width="3" fill="none" opacity=".8" filter="url(#pb2)"/>
<!-- face -->
<path d="M222 191 C262 190 294 202 308 226 C318 244 322 268 324 292 C327 326 322 358 313 382 C302 408 284 430 264 444 C248 454 234 456 221 456 C208 456 196 454 180 444 C160 430 142 408 130 382 C120 358 115 326 118 292 C120 268 124 244 134 226 C148 202 182 190 222 191Z" fill="url(#pskin)"/>
<path d="M222 189 C264 188 296 200 310 224 C320 242 324 266 326 292" stroke="#2e221f" stroke-width="5" fill="none" opacity=".5" filter="url(#pb4)"/>
<path d="M222 189 C180 188 146 200 132 224 C122 242 118 266 116 292" stroke="#2e221f" stroke-width="5" fill="none" opacity=".5" filter="url(#pb4)"/>
<!-- brows -->
<path d="M146 276 Q170 264 196 272" stroke="#7a5546" stroke-width="4" fill="none" opacity=".8" filter="url(#pb2)"/>
<path d="M238 272 Q266 264 292 276" stroke="#7a5546" stroke-width="4" fill="none" opacity=".8" filter="url(#pb2)"/>
<!-- eyes -->
<path d="M150 302 Q172 286 196 302 Q172 314 150 302Z" fill="#f3e9e4"/><circle cx="172" cy="300" r="10.400" fill="#3b2620"/><circle cx="174" cy="297" r="2" fill="#fff"/>
<path d="M148 303 Q172 284 198 302" stroke="#3a2620" stroke-width="2.400" fill="none"/>
<path d="M238 302 Q262 286 284 300 Q262 314 238 302Z" fill="#f3e9e4"/><circle cx="260" cy="299" r="10.400" fill="#3b2620"/><circle cx="262" cy="296" r="2" fill="#fff"/>
<path d="M236 302 Q262 284 286 301" stroke="#3a2620" stroke-width="2.400" fill="none"/>
<ellipse cx="172" cy="316" rx="24" ry="6" fill="#d9a48c" opacity=".5" filter="url(#pb2)"/>
<ellipse cx="260" cy="316" rx="24" ry="6" fill="#d9a48c" opacity=".5" filter="url(#pb2)"/>
<!-- nose -->
<path d="M198 360 Q208 370 218 366 Q228 370 238 360" stroke="#b9806a" stroke-width="3" fill="none" opacity=".8" filter="url(#pb2)"/>
<path d="M204 300 Q198 340 196 358" stroke="#dcaa92" stroke-width="5" fill="none" opacity=".7" filter="url(#pb4)"/>
<!-- mouth -->
<path d="M182 394 Q200 392 216 396 Q234 392 253 394 Q236 410 216 410 Q198 410 182 394Z" fill="#c9625f"/>
<path d="M182 394 Q216 402 253 394" stroke="#a84a4a" stroke-width="1.400" fill="none"/>
<!-- chin shade -->
<path d="M170 438 Q219 470 268 438" stroke="#d09a80" stroke-width="5" fill="none" opacity=".5" filter="url(#pb4)"/>
</g>
</svg>

<svg style="left:27px;top:943.5px" width="22" height="26" viewBox="0 0 22 26"><path d="M2 1.800 L19.600 13 L2 24.200Z" fill="#fff" stroke="#fff" stroke-width="1.600" stroke-linejoin="round"/></svg>
<div class="t" style="left:72.5px;top:935.700px;font-size:25.800px;color:#9293a2;letter-spacing:.2px;-webkit-text-stroke:.25px #9293a2">00:00.00</div>
<div style="left:186px;top:950.2px;width:342.500px;height:11.600px;border-radius:5.800px;background:#333"></div>
<div style="left:182.8px;top:944px;width:24px;height:24px;border-radius:50%;background:#fff"></div>
<div class="t" style="left:539px;top:935.700px;font-size:25.800px;color:#9293a2;letter-spacing:.2px;-webkit-text-stroke:.25px #9293a2">01:00.00</div>
<div style="left:176px;top:1020px;width:144px;height:47.500px;border-radius:5px;background:#2b2b2b"></div>
<div class="t c" style="left:176px;top:1024px;width:144px;font-size:25.300px;-webkit-text-stroke:.3px #fff">Screenshot</div>
<div style="left:340px;top:1020px;width:144px;height:47.500px;border-radius:5px;background:#007aff"></div>
<div class="t c" style="left:340px;top:1024px;width:144px;font-size:25.500px;-webkit-text-stroke:.3px #fff">Export video</div>
<div class="t" style="left:33px;top:1146.400px;font-size:29px;color:#f2f2f4;letter-spacing:.35px;-webkit-text-stroke:.3px #f2f2f4">Material info</div>
<div class="t" style="left:115.3px;top:1195.5px;font-size:25.500px;color:#8a8b9c;letter-spacing:.14px">female-single-video-fa...</div>
<svg style="left:26px;top:1195px" width="100" height="45" viewBox="0 0 2576 1159"><g fill="none" stroke="#8a8b9c" stroke-width="54" stroke-linecap="butt" stroke-linejoin="miter"><path d="M265 285 H770 M515 235 V440 M290 365 H740 M235 440 H795"/><path d="M600 478 L330 548 L640 572 L290 648 L700 610" stroke-width="42"/><path d="M610 600 L740 660" stroke-width="42"/><path d="M515 610 V760 Q515 795 440 780"/><path d="M420 690 L250 772 M600 690 L780 772" stroke-width="46"/><path d="M850 370 H1100 M975 235 V795 M962 410 Q930 540 858 625 M990 440 L1100 555"/><path d="M1110 370 H1410 M1315 235 V750 Q1315 800 1210 768 M1302 395 Q1240 580 1080 690"/></g><g fill="#8a8b9c"><path d="M1575 300 H1668 V742 H1575 V400 Q1530 425 1472 440 V372 Q1540 350 1575 300Z"/><rect x="1824" y="428" width="108" height="74"/><rect x="1824" y="660" width="108" height="82"/></g></svg>
<div class="t r" style="left:443px;top:1195.5px;width:200px;font-size:24.200px;color:#8a8b9c;letter-spacing:.28px;margin-left:1.5px">601.61 KB</div>
</div>
</div>
</body>
</html>
